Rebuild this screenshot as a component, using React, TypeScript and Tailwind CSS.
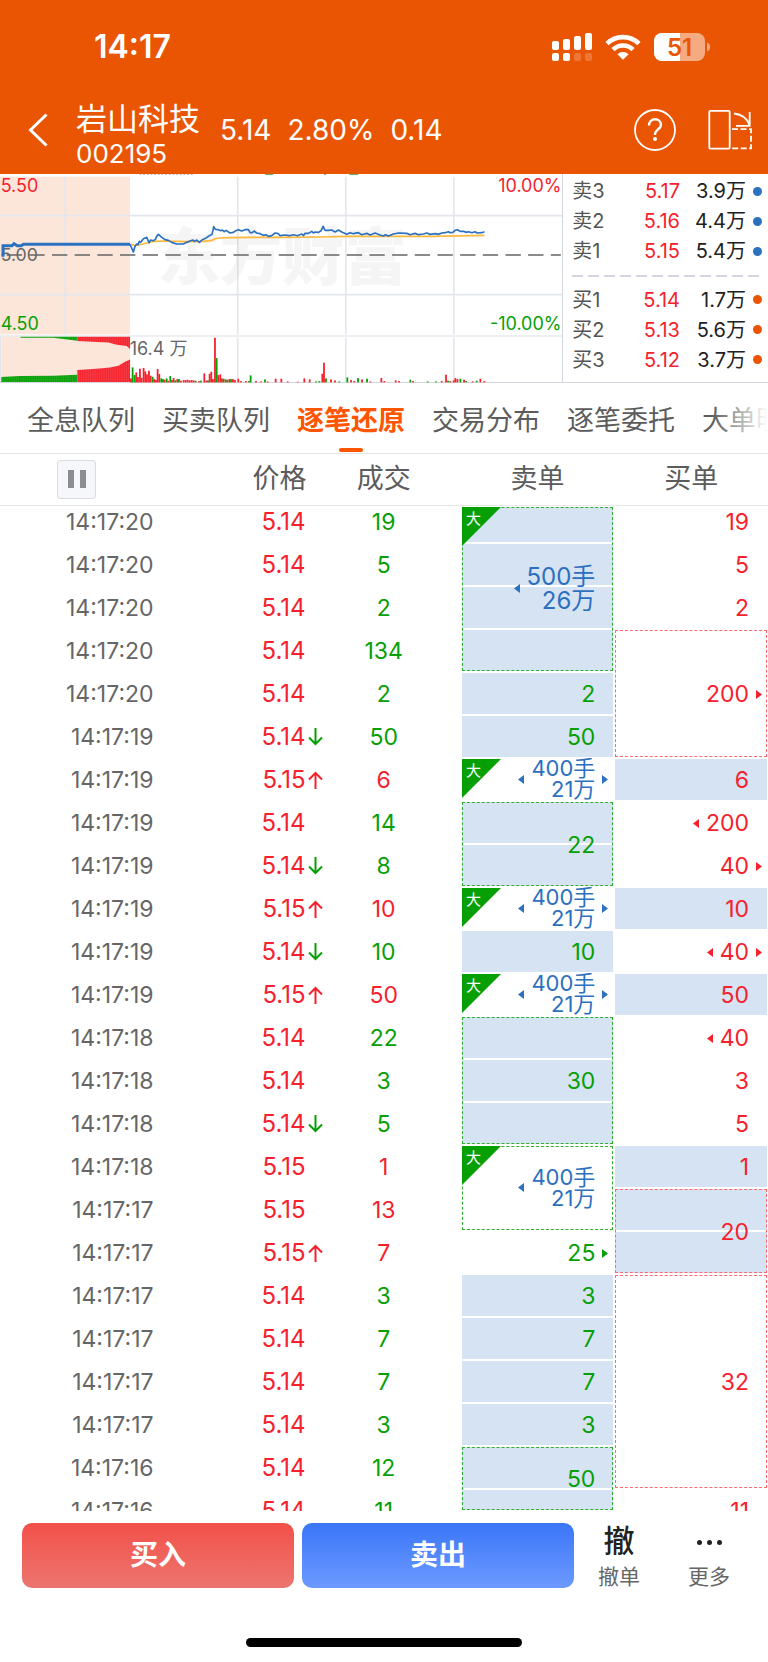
import React from 'react';

type Tone = 'red' | 'green' | 'blue';

interface Trade {
  time: string;
  price: string;
  move?: 'up' | 'down';
  volume: string;
  side: 'buy' | 'sell';
}

interface Order {
  from: number;
  rows: number;
  lines: string[];
  tone: Tone;
  fill?: boolean;
  box?: boolean;
  big?: boolean;
  large?: boolean;
  left?: boolean;
  right?: boolean;
}

const toneText: Record<Tone, string> = {
  red: 'text-[#f5222d]',
  green: 'text-[#06a006]',
  blue: 'text-[#2c70c0]',
};

const trades: Trade[] = [
  { time: '14:17:20', price: '5.14', volume: '19', side: 'sell' },
  { time: '14:17:20', price: '5.14', volume: '5', side: 'sell' },
  { time: '14:17:20', price: '5.14', volume: '2', side: 'sell' },
  { time: '14:17:20', price: '5.14', volume: '134', side: 'sell' },
  { time: '14:17:20', price: '5.14', volume: '2', side: 'sell' },
  { time: '14:17:19', price: '5.14', move: 'down', volume: '50', side: 'sell' },
  { time: '14:17:19', price: '5.15', move: 'up', volume: '6', side: 'buy' },
  { time: '14:17:19', price: '5.14', volume: '14', side: 'sell' },
  { time: '14:17:19', price: '5.14', move: 'down', volume: '8', side: 'sell' },
  { time: '14:17:19', price: '5.15', move: 'up', volume: '10', side: 'buy' },
  { time: '14:17:19', price: '5.14', move: 'down', volume: '10', side: 'sell' },
  { time: '14:17:19', price: '5.15', move: 'up', volume: '50', side: 'buy' },
  { time: '14:17:18', price: '5.14', volume: '22', side: 'sell' },
  { time: '14:17:18', price: '5.14', volume: '3', side: 'sell' },
  { time: '14:17:18', price: '5.14', move: 'down', volume: '5', side: 'sell' },
  { time: '14:17:18', price: '5.15', volume: '1', side: 'buy' },
  { time: '14:17:17', price: '5.15', volume: '13', side: 'buy' },
  { time: '14:17:17', price: '5.15', move: 'up', volume: '7', side: 'buy' },
  { time: '14:17:17', price: '5.14', volume: '3', side: 'sell' },
  { time: '14:17:17', price: '5.14', volume: '7', side: 'sell' },
  { time: '14:17:17', price: '5.14', volume: '7', side: 'sell' },
  { time: '14:17:17', price: '5.14', volume: '3', side: 'sell' },
  { time: '14:17:16', price: '5.14', volume: '12', side: 'sell' },
  { time: '14:17:16', price: '5.14', volume: '11', side: 'sell' },
];

const sellOrders: Order[] = [
  { from: 0, rows: 4, lines: ['500手', '26万'], tone: 'blue', fill: true, box: true, big: true, large: true, left: true },
  { from: 4, rows: 1, lines: ['2'], tone: 'green', fill: true },
  { from: 5, rows: 1, lines: ['50'], tone: 'green', fill: true },
  { from: 6, rows: 1, lines: ['400手', '21万'], tone: 'blue', big: true, left: true, right: true },
  { from: 7, rows: 2, lines: ['22'], tone: 'green', fill: true, box: true },
  { from: 9, rows: 1, lines: ['400手', '21万'], tone: 'blue', big: true, left: true, right: true },
  { from: 10, rows: 1, lines: ['10'], tone: 'green', fill: true },
  { from: 11, rows: 1, lines: ['400手', '21万'], tone: 'blue', big: true, left: true, right: true },
  { from: 12, rows: 3, lines: ['30'], tone: 'green', fill: true, box: true },
  { from: 15, rows: 2, lines: ['400手', '21万'], tone: 'blue', box: true, big: true, left: true },
  { from: 17, rows: 1, lines: ['25'], tone: 'green', right: true },
  { from: 18, rows: 1, lines: ['3'], tone: 'green', fill: true },
  { from: 19, rows: 1, lines: ['7'], tone: 'green', fill: true },
  { from: 20, rows: 1, lines: ['7'], tone: 'green', fill: true },
  { from: 21, rows: 1, lines: ['3'], tone: 'green', fill: true },
  { from: 22, rows: 2, lines: ['50'], tone: 'green', fill: true, box: true },
];

const buyOrders: Order[] = [
  { from: 0, rows: 1, lines: ['19'], tone: 'red' },
  { from: 1, rows: 1, lines: ['5'], tone: 'red' },
  { from: 2, rows: 1, lines: ['2'], tone: 'red' },
  { from: 3, rows: 3, lines: ['200'], tone: 'red', box: true, right: true },
  { from: 6, rows: 1, lines: ['6'], tone: 'red', fill: true },
  { from: 7, rows: 1, lines: ['200'], tone: 'red', left: true },
  { from: 8, rows: 1, lines: ['40'], tone: 'red', right: true },
  { from: 9, rows: 1, lines: ['10'], tone: 'red', fill: true },
  { from: 10, rows: 1, lines: ['40'], tone: 'red', left: true, right: true },
  { from: 11, rows: 1, lines: ['50'], tone: 'red', fill: true },
  { from: 12, rows: 1, lines: ['40'], tone: 'red', left: true },
  { from: 13, rows: 1, lines: ['3'], tone: 'red' },
  { from: 14, rows: 1, lines: ['5'], tone: 'red' },
  { from: 15, rows: 1, lines: ['1'], tone: 'red', fill: true },
  { from: 16, rows: 2, lines: ['20'], tone: 'red', fill: true, box: true },
  { from: 18, rows: 5, lines: ['32'], tone: 'red', box: true },
  { from: 23, rows: 1, lines: ['11'], tone: 'red' },
];

const tabs = ['全息队列', '买卖队列', '逐笔还原', '交易分布', '逐笔委托', '大单明细'];

const asks = [
  ['卖3', '5.17', '3.9万'],
  ['卖2', '5.16', '4.4万'],
  ['卖1', '5.15', '5.4万'],
];

const bids = [
  ['买1', '5.14', '1.7万'],
  ['买2', '5.13', '5.6万'],
  ['买3', '5.12', '3.7万'],
];

// The list is scrolled part way, so the first and last rows are cut off
const rowHeight = (i: number) => (i === 0 ? 37 : i === trades.length - 1 ? 22 : 43);

const rowAlign = (i: number) => (i === 0 ? 'justify-end' : 'justify-start');

const StatusBar = () => (
  <div className="flex h-[86px] items-center justify-between pt-2 pr-[57px] pl-[94px]">
    <span className="text-[32px] leading-9 font-semibold">14:17</span>
    <div className="flex items-center gap-[13px]">
      <svg width="40" height="28" viewBox="0 0 40 28" fill="#fff">
        <rect x="0" y="8" width="7" height="9" rx="2" />
        <rect x="11" y="6" width="7" height="11" rx="2" />
        <rect x="22" y="3" width="7" height="14" rx="2" />
        <rect x="33" y="0" width="7" height="17" rx="2" />
        <rect x="0" y="20" width="7" height="8" rx="2" />
        <rect x="11" y="20" width="7" height="8" rx="2" />
        <rect x="22" y="20" width="7" height="8" rx="2" opacity=".2" />
        <rect x="33" y="20" width="7" height="8" rx="2" opacity=".2" />
      </svg>
      <svg width="36" height="26" viewBox="0 0 36 26" fill="none" stroke="#fff" strokeWidth="4.6">
        <path d="M2 9.6a23 23 0 0 1 32 0" />
        <path d="M8 15.6a14.4 14.4 0 0 1 20 0" />
        <path d="M18 25.8l-5.6-5.6a8 8 0 0 1 11.2 0z" fill="#fff" stroke="none" />
      </svg>
      <svg width="57" height="28" viewBox="0 0 57 28">
        <defs>
          <clipPath id="battery">
            <rect width="51" height="28" rx="8" />
          </clipPath>
        </defs>
        <g clipPath="url(#battery)">
          <rect width="51" height="28" fill="#f5ab82" />
          <rect width="26" height="28" fill="#fff" />
        </g>
        <path d="M53 9.5c4 1.2 4 7.8 0 9z" fill="#f5ab82" />
        <text x="25.5" y="22.5" textAnchor="middle" fontSize="24" fontWeight="600" fill="#ea5504">51</text>
      </svg>
    </div>
  </div>
);

const TitleBar = () => (
  <div className="flex h-[88px] items-center pr-[16px] pl-[28px]">
    <button aria-label="返回" className="flex w-12 items-center">
      <svg width="20" height="34" viewBox="0 0 20 34" fill="none" stroke="#fff" strokeWidth="3">
        <path d="M18.500 1.500L2.500 17l16 15.500" />
      </svg>
    </button>
    <div className="flex flex-col pt-[9px]">
      <h1 className="text-[31px] leading-[38px]">岩山科技</h1>
      <span className="text-[26px] leading-8">002195</span>
    </div>
    <div className="ml-[20px] flex gap-4 text-[28px] leading-9">
      <span>5.14</span>
      <span>2.80%</span>
      <span>0.14</span>
    </div>
    <div className="ml-auto flex items-center gap-8">
      <button aria-label="帮助">
        <svg width="42" height="42" viewBox="0 0 42 42" fill="none" stroke="#fff">
          <circle cx="21" cy="21" r="20" strokeWidth="1.8" />
          <path d="M15 16.500c0-3.800 2.600-6.200 6-6.200s6 2.300 6 5.500c0 4.800-6 4.700-6 9.200v1" strokeWidth="2.400" />
          <circle cx="21" cy="30" r="2" fill="#fff" stroke="none" />
        </svg>
      </button>
      <button aria-label="横屏">
        <svg width="44" height="42" viewBox="0 0 44 42" fill="none" stroke="#fff" strokeWidth="1.800">
          <rect x="1.300" y="1.800" width="20.400" height="37.800" rx="1" />
          <path d="M26 4.500c8 1 13.500 5.500 15.500 11.500M41.700 3v13.800H28" />
          <path d="M24 20.200h19v19.200H24" strokeDasharray="6 2.500" />
        </svg>
      </button>
    </div>
  </div>
);

const priceLine =
  '390,239 400,262 405,245 410,238 414,240 418,230 422,233 430,222 440,218 447,234 452,226 460,228 466,224 470,215 475,209 485,218 495,225 505,227 515,233 530,238 550,238 560,233 570,229 578,226 583,230 590,226 598,233 607,225 618,220 628,213 636,209 641,186 646,194 655,195 662,198 667,196 672,201 678,197 690,205 700,203 707,198 715,195 725,199 735,195 745,195 750,204 757,204 762,199 770,205 780,207 790,212 798,210 805,215 815,213 825,205 835,207 840,213 855,211 868,213 880,210 892,213 905,208 910,213 915,206 925,206 935,200 940,205 945,202 955,203 963,198 969,185 975,197 985,197 995,196 1005,202 1015,196 1025,202 1040,209 1050,204 1060,207 1075,204 1085,210 1100,206 1110,211 1125,205 1140,211 1150,214 1156,210 1165,214 1180,208 1195,205 1220,206 1230,210 1245,206 1255,210 1270,208 1280,205 1290,209 1305,207 1315,209 1325,205 1335,204 1345,201 1350,204 1358,203 1365,197 1372,195 1380,200 1390,200 1400,203 1405,201 1415,204 1425,201 1430,205 1445,204 1453,201';

const averageLine =
  '392,238 405,243 420,240 440,235 460,230 500,229 560,231 610,230 636,227 645,222 660,220 700,219 760,218 850,218 960,217 1040,215 1200,215 1300,215 1453,212';

// [x, height, up]
const volumeBars: [number, number, number][] = [
  [390, 12, 1], [395, 45, 0], [401, 22, 0], [406, 30, 1], [411, 16, 1], [417, 41, 1], [422, 14, 1],
  [428, 43, 1], [433, 33, 1], [438, 24, 1], [444, 35, 1], [449, 20, 1], [455, 17, 0], [460, 10, 1],
  [465, 7, 1], [470, 40, 1], [475, 25, 1], [481, 12, 0], [486, 10, 0], [491, 8, 1], [497, 12, 0],
  [502, 5, 1], [508, 19, 0], [513, 7, 1], [518, 13, 1], [523, 6, 0], [529, 10, 1], [534, 10, 0],
  [540, 5, 1], [548, 7, 1], [554, 7, 1], [560, 8, 1], [566, 6, 1], [572, 7, 1], [578, 6, 1],
  [584, 5, 0], [594, 4, 1], [600, 5, 0], [610, 27, 1], [616, 5, 1], [621, 6, 0], [626, 26, 1],
  [631, 32, 1], [636, 10, 1], [642, 134, 1], [647, 73, 0], [652, 22, 1], [658, 24, 1], [663, 12, 1],
  [668, 11, 0], [674, 9, 1], [679, 8, 0], [685, 10, 1], [690, 10, 0], [696, 10, 1], [702, 7, 1],
  [712, 11, 1], [720, 4, 1], [735, 4, 1], [744, 4, 0], [749, 21, 0], [765, 4, 1], [780, 3, 1],
  [792, 9, 0], [800, 3, 1], [824, 11, 1], [841, 11, 1], [860, 3, 1], [890, 2, 1], [910, 12, 1],
  [926, 9, 1], [945, 3, 0], [955, 4, 0], [964, 26, 1], [969, 59, 1], [975, 12, 0], [990, 9, 1],
  [1002, 6, 1], [1015, 3, 0], [1039, 15, 0], [1050, 7, 1], [1060, 4, 1], [1071, 13, 0], [1083, 9, 1],
  [1098, 11, 0], [1108, 3, 1], [1141, 13, 1], [1150, 4, 1], [1184, 6, 1], [1194, 4, 1], [1228, 8, 0],
  [1236, 4, 1], [1280, 3, 0], [1305, 3, 0], [1322, 4, 1], [1335, 23, 1], [1341, 5, 0], [1348, 4, 1],
  [1358, 6, 1], [1363, 13, 1], [1369, 10, 1], [1378, 11, 0], [1389, 8, 1], [1395, 4, 0], [1415, 3, 1],
  [1427, 5, 0], [1438, 11, 1], [1450, 4, 1],
];

const Chart = () => (
  <svg viewBox="0 28 1686 627" className="block w-full" role="img" aria-label="分时图">
    <defs>
      <pattern id="stripes" width="5.400" height="10" patternUnits="userSpaceOnUse">
        <rect width="1" height="10" fill="#fff" opacity=".3" />
      </pattern>
    </defs>
    <path d="M418 29H578" stroke="#aaa" strokeWidth="3" strokeDasharray="6 5" />
    <g fill="#5cba5c">
      <rect x="795" y="28" width="24" height="3" />
      <rect x="972" y="28" width="6" height="3" />
      <rect x="1048" y="28" width="26" height="3" />
    </g>
    <rect x="0" y="36" width="390" height="473" fill="#fce6da" />
    <rect x="4" y="516" width="386" height="136" fill="#fce6da" />
    <g stroke="#e4e6ee" strokeWidth="5">
      <path d="M0 153H1686M0 390H1686" />
      <path d="M195 36V509M713 36V509M1037 36V509M1361 36V509" />
      <path d="M713 519V652M1037 519V652M1361 519V652" />
    </g>
    <path d="M0 514H1686M2 514V654" stroke="#dcdfe6" strokeWidth="3" fill="none" />
    <path d="M0 653H1686" stroke="#d4d6de" strokeWidth="3" />
    <text x="472" y="346" fontSize="187" fontWeight="900" fill="#000" opacity=".035">东方财富</text>
    <path d="M20 271H1682" stroke="#666" strokeWidth="4" strokeDasharray="46 22" />
    <text x="2" y="290" fontSize="53" fill="#666">5.00</text>
    <path d="M4 272H9V243H36L42 237L52 243H64L70 239H390" fill="none" stroke="#2c70c0" strokeWidth="9" />
    <polyline points={averageLine} fill="none" stroke="#fdb93a" strokeWidth="5" />
    <polyline points={priceLine} fill="none" stroke="#2c70c0" strokeWidth="5" strokeLinejoin="round" />
    <g fontSize="54">
      <text x="2" y="82" fill="#f5222d">5.50</text>
      <text x="2" y="495" fill="#06a006">4.50</text>
      <text x="1684" y="82" textAnchor="end" fill="#f5222d">10.00%</text>
      <text x="1684" y="495" textAnchor="end" fill="#06a006">-10.00%</text>
      <text x="389" y="571" fill="#666">16.4 万</text>
    </g>
    <path d="M62 516H232V528L190 523L160 519H62Z" fill="#06a006" />
    <path d="M232 516H390V553L380 544L350 540L325 533L290 532L232 529Z" fill="#f5222d" />
    <path d="M4 652V637L60 634L160 633L232 630V652Z" fill="#06a006" />
    <path d="M232 652V616L290 612L330 608L355 603L375 591L390 584V652Z" fill="#f5222d" />
    <path d="M62 516H390V553L350 540L232 528L160 519H62ZM4 652V637L232 630V616L330 608L390 584V652Z" fill="url(#stripes)" />
    {volumeBars.map(([x, h, up]) => (
      <rect key={x} x={x} y={653 - h} width="5.400" height={h} fill={up ? '#f5222d' : '#06a006'} />
    ))}
  </svg>
);

const BookRow = ({ row, dot }: { row: string[]; dot: string }) => (
  <div className="flex flex-1 items-center">
    <span className="w-[42px] text-[#555]">{row[0]}</span>
    <span className="flex-1 text-right text-[#f5222d]">{row[1]}</span>
    <span className="w-[66px] text-right text-[#222]">{row[2]}</span>
    <span className={`ml-[7px] size-[9px] rounded-full ${dot}`} />
  </div>
);

const OrderBook = () => (
  <div className="flex w-[26.8%] flex-col border-b border-l border-[#d4d6de] pt-[2px] pr-[6px] pb-[7px] pl-[9px] text-[20px] leading-6 whitespace-nowrap">
    {asks.map((row) => (
      <BookRow key={row[0]} row={row} dot="bg-[#2c70c0]" />
    ))}
    <svg className="h-[18px] w-full" aria-hidden="true">
      <line x1="0" y1="9" x2="100%" y2="9" stroke="#d4d6de" strokeWidth="2" strokeDasharray="11 5" />
    </svg>
    {bids.map((row) => (
      <BookRow key={row[0]} row={row} dot="bg-[#ea5504]" />
    ))}
  </div>
);

const Tabs = () => (
  <nav className="relative overflow-hidden border-b border-[#e4e4e4]">
    <div className="flex h-[70px] gap-[27px] pl-[27px] text-[27px] leading-9 whitespace-nowrap text-[#5c5c5c]">
      {tabs.map((tab) => {
        const active = tab === '逐笔还原';
        return (
          <button
            key={tab}
            className={`flex shrink-0 flex-col items-center pt-5 ${active ? 'font-bold text-[#ff5500]' : ''}`}
          >
            {tab}
            {active && <span className="mt-[9px] h-1 w-6 rounded-sm bg-[#ff5500]" />}
          </button>
        );
      })}
    </div>
    <div className="absolute inset-y-0 right-0 w-14 bg-gradient-to-r from-white/0 to-white" />
  </nav>
);

const MoveArrow = ({ move }: { move?: 'up' | 'down' }) => (
  <span className="ml-[2px] w-[15px]">
    {move && (
      <svg width="15" height="18" viewBox="0 0 15 18" fill="none" strokeWidth="2" stroke={move === 'up' ? '#f5222d' : '#06a006'}>
        <path d={move === 'up' ? 'M7.500 18V2M1 8.500L7.500 2L14 8.500' : 'M7.500 0V16M1 9.500L7.500 16L14 9.500'} />
      </svg>
    )}
  </span>
);

const Pointer = ({ side }: { side: 'left' | 'right' }) => (
  <svg width="6" height="9" viewBox="0 0 6 9" fill="currentColor">
    <path d={side === 'left' ? 'M6 0V9L0 4.500Z' : 'M0 0V9L6 4.500Z'} />
  </svg>
);

const OrderCell = ({ order }: { order: Order }) => {
  const rows = Array.from({ length: order.rows }, (_, k) => order.from + k);
  const height = rows.reduce((sum, i) => sum + rowHeight(i), 0);
  const single = order.rows === 1;
  const size = order.large ? 'text-[24px] leading-6' : order.tone === 'blue' ? 'text-[22px] leading-[21px]' : '';

  return (
    <td rowSpan={order.rows} className={`p-0 align-top ${toneText[order.tone]}`}>
      <div className="grid overflow-hidden px-px" style={{ height }}>
        <div className="col-start-1 row-start-1">
          {order.fill &&
            rows.map((i) => (
              <div key={i} className="py-px" style={{ height: rowHeight(i) }}>
                <div className="h-full bg-[#d6e3f3]" />
              </div>
            ))}
        </div>
        {order.box && (
          <div
            className={`col-start-1 row-start-1 my-px border border-dashed ${order.tone === 'red' ? 'border-[#fb6a70]' : 'border-[#2fae2f]'}`}
          />
        )}
        {order.big && (
          <svg width="39" height="39" viewBox="0 0 39 39" className="col-start-1 row-start-1 mt-px">
            <path d="M0 0H39L0 39Z" fill="#06a006" />
            <text x="4" y="16.500" fontSize="15" fill="#fff">大</text>
          </svg>
        )}
        <div className={`col-start-1 row-start-1 flex flex-col ${single ? rowAlign(order.from) : 'justify-center'}`} style={{ height }}>
          <div className={`flex h-[43px] shrink-0 items-center justify-end ${order.tone === 'blue' ? '' : 'pt-0.5'}`}>
            {order.left && <Pointer side="left" />}
            <span className={`ml-[7px] text-right whitespace-nowrap ${size}`}>
              {order.lines.map((line) => (
                <span key={line} className="block">{line}</span>
              ))}
            </span>
            <span className="flex w-[18px] pl-[7px]">{order.right && <Pointer side="right" />}</span>
          </div>
        </div>
      </div>
    </td>
  );
};

const Tape = () => (
  <table className="w-full table-fixed border-collapse text-[23px] leading-7">
    <colgroup>
      <col className="w-[20%]" />
      <col className="w-[22%]" />
      <col className="w-[18%]" />
      <col className="w-[20%]" />
      <col className="w-[20%]" />
    </colgroup>
    <thead className="text-[27px] text-[#5c5c5c]">
      <tr className="h-[51px] border-b border-[#e8e8e8]">
        <th className="p-0 pl-[57px] text-left">
          <button
            aria-label="暂停"
            className="flex size-[39px] items-center justify-center gap-[6px] rounded-[3px] border border-[#d9dce4] bg-[#f6f7fa]"
          >
            <span className="h-[18px] w-[6px] bg-[#8c8c92]" />
            <span className="h-[18px] w-[6px] bg-[#8c8c92]" />
          </button>
        </th>
        <th className="p-0 pr-[16px] text-right font-normal">价格</th>
        <th className="p-0 pr-[16px] font-normal">成交</th>
        <th className="p-0 font-normal">卖单</th>
        <th className="p-0 font-normal">买单</th>
      </tr>
    </thead>
    <tbody>
      {trades.map((trade, i) => {
        const sell = sellOrders.find((o) => o.from === i);
        const buy = buyOrders.find((o) => o.from === i);
        const cell = `flex flex-col overflow-hidden ${rowAlign(i)}`;
        const height = rowHeight(i);
        return (
          <tr key={i}>
            <td className="p-0 text-[#666]">
              <div className={cell} style={{ height }}>
                <div className="flex h-[43px] shrink-0 items-center justify-end pt-0.5">{trade.time}</div>
              </div>
            </td>
            <td className="p-0 text-[24px] text-[#f5222d]">
              <div className={cell} style={{ height }}>
                <div className="flex h-[43px] shrink-0 items-center justify-end pt-0.5">
                  {trade.price}
                  <MoveArrow move={trade.move} />
                </div>
              </div>
            </td>
            <td className={`p-0 pr-[16px] ${trade.side === 'buy' ? 'text-[#f5222d]' : 'text-[#06a006]'}`}>
              <div className={cell} style={{ height }}>
                <div className="flex h-[43px] shrink-0 items-center justify-center pt-0.5">{trade.volume}</div>
              </div>
            </td>
            {sell && <OrderCell order={sell} />}
            {buy && <OrderCell order={buy} />}
          </tr>
        );
      })}
    </tbody>
  </table>
);

const ActionBar = () => (
  <footer className="flex pt-3 pr-[14px] pl-[22px] text-[28px]">
    <div className="flex flex-1 gap-2">
      <button className="h-[65px] flex-1 rounded-[10px] bg-gradient-to-b from-[#f25049] to-[#ec746e] font-bold text-white">
        买入
      </button>
      <button className="h-[65px] flex-1 rounded-[10px] bg-gradient-to-b from-[#3a76f8] to-[#6c99ff] font-bold text-white">
        卖出
      </button>
    </div>
    <div className="flex w-[180px] text-[21px] leading-7 text-[#666]">
      <button className="flex flex-1 flex-col items-center">
        <span className="h-10 text-[31px] leading-9 font-medium text-[#222]">撤</span>
        撤单
      </button>
      <button className="flex flex-1 flex-col items-center">
        <span className="flex h-10 items-center gap-[5px]">
          <span className="size-[5px] rounded-full bg-[#222]" />
          <span className="size-[5px] rounded-full bg-[#222]" />
          <span className="size-[5px] rounded-full bg-[#222]" />
        </span>
        更多
      </button>
    </div>
  </footer>
);

export default function App() {
  return (
    <div
      lang="zh-CN"
      className="flex min-h-screen flex-col bg-white font-['Inter','Noto_Sans_CJK_SC',sans-serif] text-[#222]"
    >
      <header className="bg-[#ea5504] text-white">
        <StatusBar />
        <TitleBar />
      </header>
      <section className="flex">
        <div className="w-[73.2%]">
          <Chart />
        </div>
        <OrderBook />
      </section>
      <Tabs />
      <Tape />
      <ActionBar />
      <div className="mt-auto flex justify-center pb-[15px]">
        <div className="h-[9px] w-[36%] rounded-full bg-black" />
      </div>
    </div>
  );
}
